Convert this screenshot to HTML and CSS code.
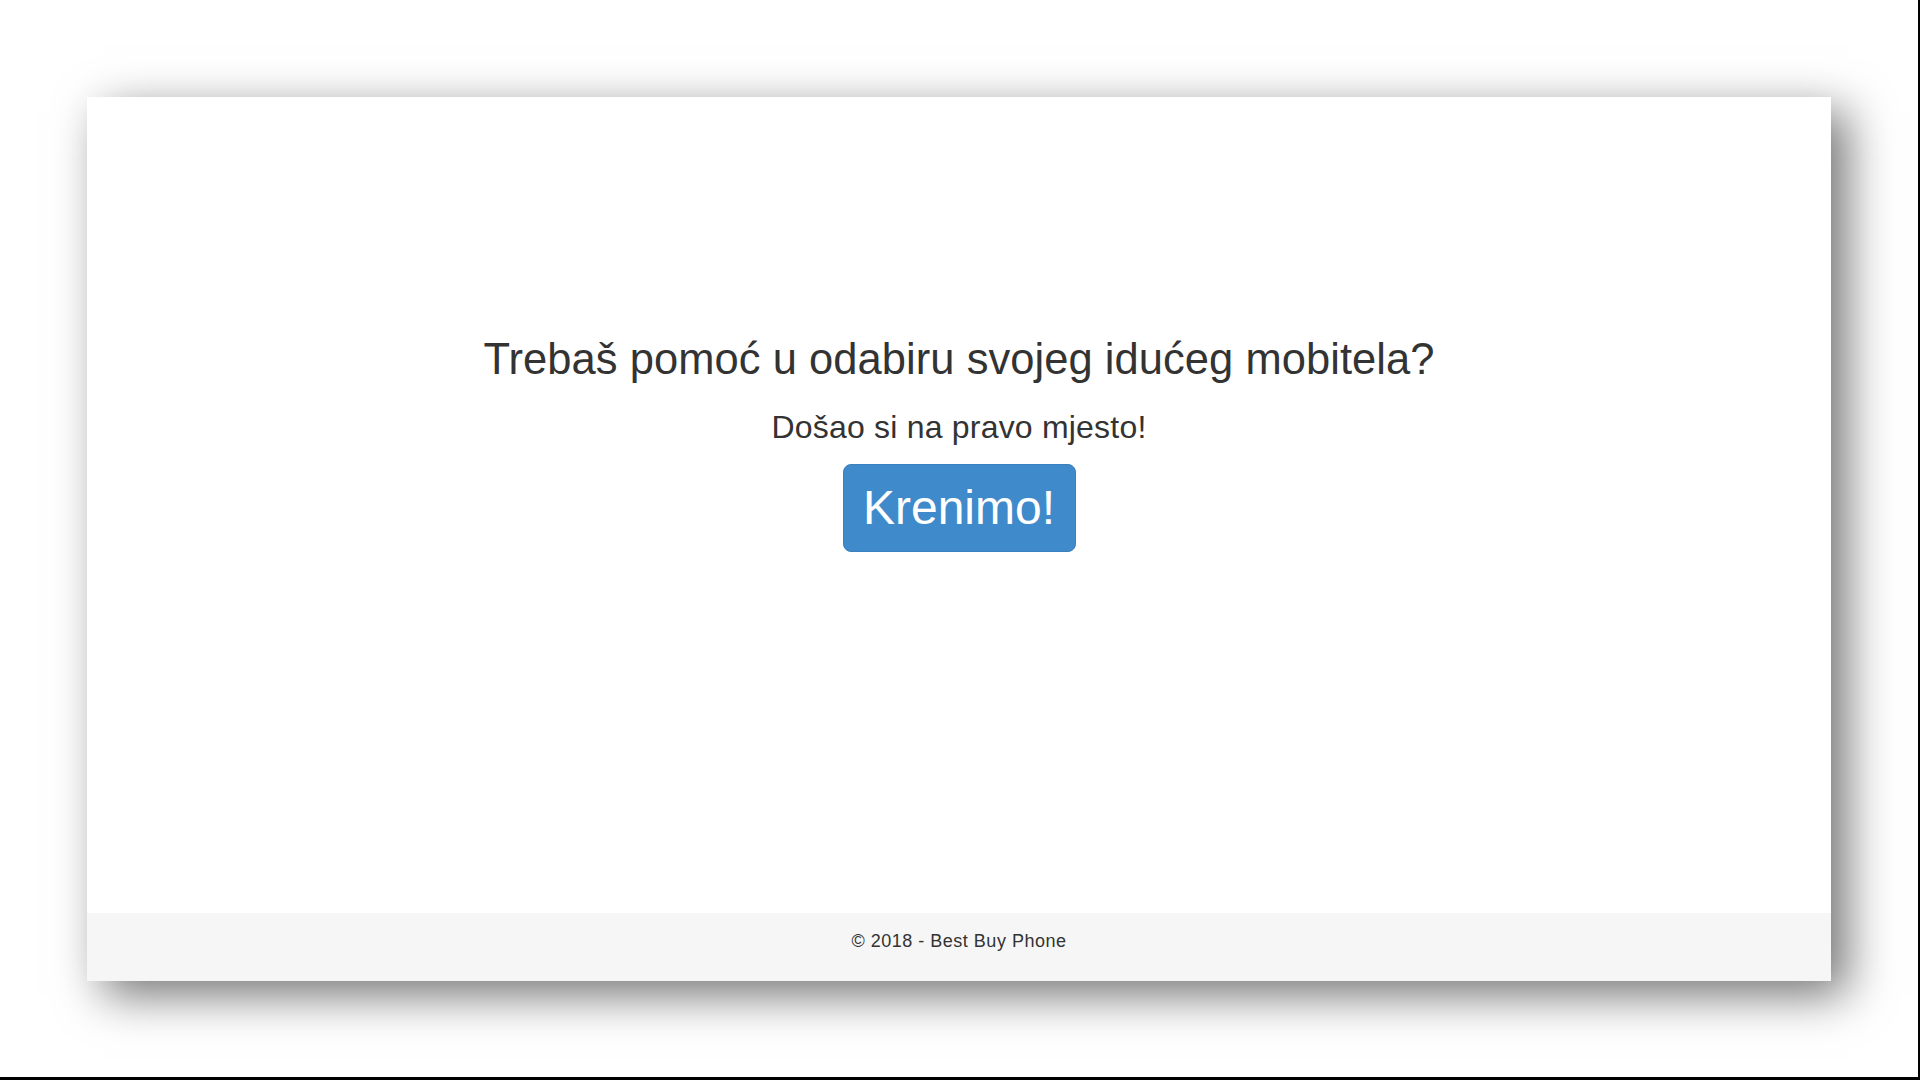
FILE: index.html
```html
<!DOCTYPE html>
<html lang="hr">
<head>
<meta charset="utf-8">
<title>Best Buy Phone</title>
<link rel="stylesheet" href="styles.css">
</head>
<body>
<div class="screen">
  <div class="card">
    <main class="hero">
      <h1 class="title">Trebaš pomoć u odabiru svojeg idućeg mobitela?</h1>
      <h3 class="subtitle">Došao si na pravo mjesto!</h3>
      <a class="btn" href="#">Krenimo!</a>
    </main>
    <footer class="footer">
      <p class="copy">© 2018 - Best Buy Phone</p>
    </footer>
  </div>
</div>
</body>
</html>
```

FILE: styles.css
```css
html, body {
  margin: 0;
  padding: 0;
  background: #fff;
}
body {
  font-family: "Liberation Sans", Arial, sans-serif;
  color: #333;
}
.screen {
  box-sizing: border-box;
  width: 1920px;
  height: 1080px;
  padding: 97px 0 0 87px;
  border-right: 2px solid #000;
  border-bottom: 3px solid #000;
  overflow: hidden;
}
.card {
  width: 1744px;
  height: 884px;
  background: #fff;
  display: flex;
  flex-direction: column;
  box-shadow: 16px 14px 44px rgba(0, 0, 0, 0.55);
}
.hero {
  flex: 1;
  display: flex;
  flex-direction: column;
  align-items: center;
  padding-top: 241px;
}
.title {
  margin: 0;
  font-size: 43.5px;
  line-height: 1;
  font-weight: 400;
  color: #333;
  letter-spacing: 0.05px;
}
.subtitle {
  margin: 29px 0 0;
  font-size: 32px;
  line-height: 1;
  font-weight: 400;
  color: #333;
  letter-spacing: 0.2px;
}
.btn {
  margin-top: 21px;
  box-sizing: border-box;
  width: 233px;
  height: 88px;
  display: flex;
  align-items: center;
  justify-content: center;
  background: #3f8acb;
  border: 1px solid #3a80be;
  border-radius: 8px;
  color: #fff;
  font-size: 48px;
  line-height: 1;
  text-decoration: none;
}
.footer {
  height: 68px;
  background: #f6f6f6;
  box-sizing: border-box;
  padding-top: 19px;
}
.copy {
  margin: 0;
  text-align: center;
  font-size: 18px;
  line-height: 1;
  color: #333;
  letter-spacing: 0.5px;
}
```
